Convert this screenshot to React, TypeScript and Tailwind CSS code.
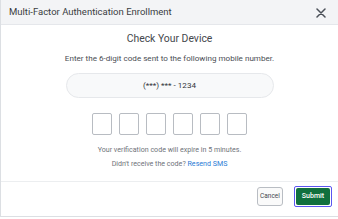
import React from "react";

export default function App() {
  const boxes = [0, 1, 2, 3, 4, 5];
  return (
    <div className="w-[338px] h-[219px] bg-white overflow-hidden" style={{ fontFamily: "Roboto, 'Liberation Sans', sans-serif" }}>
      <div className="w-[338px] h-[217px] border-l border-b border-[#dcdfe3] flex flex-col">
        <div className="h-[25px] bg-[#f3f4f6] border-b border-[#e5e7eb] flex items-center justify-between pl-[8px] pr-[12px]">
          <span className="text-[9.5px] text-[#3a3d42]">Multi-Factor Authentication Enrollment</span>
          <svg width="10" height="10" viewBox="0 0 10 10" className="mt-[1px]">
            <path d="M1 1 L9 9 M9 1 L1 9" stroke="#4b5058" strokeWidth="1.5" strokeLinecap="round" />
          </svg>
        </div>
        <div className="flex flex-col items-center">
          <div className="mt-[6px] h-[16px] leading-[16px] text-[10.4px] text-[#44474d]">Check Your Device</div>
          <div className="mt-[5px] h-[12px] leading-[12px] text-[8.1px] text-[#4a4d53]">Enter the 6-digit code sent to the following mobile number.</div>
          <div className="mt-[9px] w-[208px] h-[25px] rounded-full bg-[#f8f9fa] border border-[#e6e8eb] flex items-center justify-center text-[8.1px] text-[#33363b]">
            (***) *** - 1234
          </div>
          <div className="mt-[15px] flex gap-[7px]">
            {boxes.map((b) => (
              <div key={b} className="w-[20px] h-[22px] border border-[#b8bcc2] rounded-[2px] bg-white" />
            ))}
          </div>
          <div className="mt-[9px] h-[12px] leading-[12px] text-[7.1px] text-[#6f737a]">Your verification code will expire in 5 minutes.</div>
          <div className="mt-[2px] h-[12px] leading-[12px] text-[7.1px] text-[#6f737a]">
            Didn't receive the code? <span className="text-[#2a7bd5]">Resend SMS</span>
          </div>
        </div>
        <div className="mt-[11px] border-t border-[#eceef0] flex justify-end items-center gap-[11px] pr-[6px] pt-[4px]">
          <button className="w-[26px] h-[19px] rounded-[3px] border border-[#b9bdc3] bg-[#fafafa] text-[6.5px] text-[#45484e] flex items-center justify-center">Cancel</button>
          <div className="w-[38px] h-[21px] border border-[#5b55f0] rounded-[2px] flex items-center justify-center">
            <button className="w-[34px] h-[17px] rounded-[2px] bg-[#11703e] text-white text-[7px] font-medium flex items-center justify-center">Submit</button>
          </div>
        </div>
      </div>
    </div>
  );
}
